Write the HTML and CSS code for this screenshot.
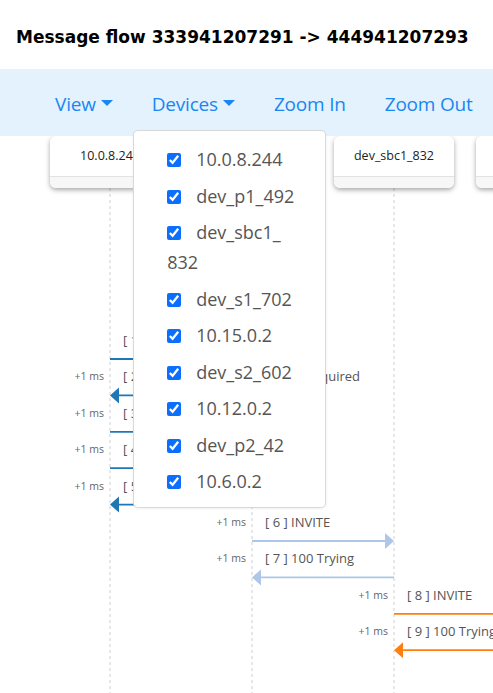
FILE: index.html
```html
<!DOCTYPE html>
<html lang="en">
<head>
<meta charset="utf-8">
<title>Message flow</title>
<link rel="stylesheet" href="styles.css">
</head>
<body>
<div class="page">
  <h1 class="title">Message flow 333941207291 -&gt; 444941207293</h1>
  <nav class="navbar">
    <div class="nav-item"><a class="nav-link caret">View</a></div>
    <div class="nav-item">
      <a class="nav-link caret">Devices</a>
      <ul class="dropdown">
        <li class="dd-item"><input type="checkbox" class="dd-check" checked>10.0.8.244</li>
        <li class="dd-item"><input type="checkbox" class="dd-check" checked>dev_p1_492</li>
        <li class="dd-item"><input type="checkbox" class="dd-check" checked>dev_sbc1_<wbr>832</li>
        <li class="dd-item"><input type="checkbox" class="dd-check" checked>dev_s1_702</li>
        <li class="dd-item"><input type="checkbox" class="dd-check" checked>10.15.0.2</li>
        <li class="dd-item"><input type="checkbox" class="dd-check" checked>dev_s2_602</li>
        <li class="dd-item"><input type="checkbox" class="dd-check" checked>10.12.0.2</li>
        <li class="dd-item"><input type="checkbox" class="dd-check" checked>dev_p2_42</li>
        <li class="dd-item"><input type="checkbox" class="dd-check" checked>10.6.0.2</li>
      </ul>
    </div>
    <div class="nav-item"><a class="nav-link">Zoom In</a></div>
    <div class="nav-item"><a class="nav-link">Zoom Out</a></div>
  </nav>

  <div class="diagram">
    <div class="cards">
      <div class="card"><div class="card-name">10.0.8.244</div><div class="card-foot"></div></div>
      <div class="card"><div class="card-name">dev_p1_492</div><div class="card-foot"></div></div>
      <div class="card"><div class="card-name">dev_sbc1_832</div><div class="card-foot"></div></div>
      <div class="card"><div class="card-name">dev_s1_702</div><div class="card-foot"></div></div>
    </div>
    <svg class="flow" width="700" height="505" viewBox="0 0 700 505">
      <g class="lifelines">
        <line x1="110" y1="0" x2="110" y2="505"/>
        <line x1="252" y1="0" x2="252" y2="505"/>
        <line x1="394" y1="0" x2="394" y2="505"/>
        <line x1="536" y1="0" x2="536" y2="505"/>
      </g>

      <!-- 1 -->
      <g class="msg c-blue">
        <text class="label" x="123" y="157">[ 1 ] INVITE</text>
        <line x1="110" y1="171" x2="244" y2="171"/>
        <polygon points="252,171 243,163 243,179"/>
      </g>
      <!-- 2 -->
      <g class="msg c-blue">
        <text class="delta" x="104" y="192.4">+1 ms</text>
        <text class="label" x="123" y="193.4">[ 2 ] 407 Proxy Authentication Required</text>
        <line x1="118" y1="207.4" x2="252" y2="207.4"/>
        <polygon points="110,207.4 119,199.4 119,215.4"/>
      </g>
      <!-- 3 -->
      <g class="msg c-blue">
        <text class="delta" x="104" y="228.8">+1 ms</text>
        <text class="label" x="123" y="229.8">[ 3 ] ACK</text>
        <line x1="110" y1="243.8" x2="244" y2="243.8"/>
        <polygon points="252,243.8 243,235.8 243,251.8"/>
      </g>
      <!-- 4 -->
      <g class="msg c-blue">
        <text class="delta" x="104" y="265.2">+1 ms</text>
        <text class="label" x="123" y="266.2">[ 4 ] INVITE</text>
        <line x1="110" y1="280.2" x2="244" y2="280.2"/>
        <polygon points="252,280.2 243,272.2 243,288.2"/>
      </g>
      <!-- 5 -->
      <g class="msg c-blue">
        <text class="delta" x="104" y="301.6">+1 ms</text>
        <text class="label" x="123" y="302.6">[ 5 ] 100 Trying</text>
        <line x1="118" y1="316.6" x2="252" y2="316.6"/>
        <polygon points="110,316.6 119,308.6 119,324.6"/>
      </g>
      <!-- 6 -->
      <g class="msg c-light">
        <text class="delta" x="246" y="338">+1 ms</text>
        <text class="label" x="265" y="339">[ 6 ] INVITE</text>
        <line x1="252" y1="353" x2="386" y2="353"/>
        <polygon points="394,353 385,345 385,361"/>
      </g>
      <!-- 7 -->
      <g class="msg c-light">
        <text class="delta" x="246" y="374.4">+1 ms</text>
        <text class="label" x="265" y="375.4">[ 7 ] 100 Trying</text>
        <line x1="260" y1="389.4" x2="394" y2="389.4"/>
        <polygon points="252,389.4 261,381.4 261,397.4"/>
      </g>
      <!-- 8 -->
      <g class="msg c-orange">
        <text class="delta" x="388" y="410.8">+1 ms</text>
        <text class="label" x="407" y="411.8">[ 8 ] INVITE</text>
        <line x1="394" y1="425.8" x2="528" y2="425.8"/>
        <polygon points="536,425.8 527,417.8 527,433.8"/>
      </g>
      <!-- 9 -->
      <g class="msg c-orange">
        <text class="delta" x="388" y="447.2">+1 ms</text>
        <text class="label" x="407" y="448.2">[ 9 ] 100 Trying</text>
        <line x1="402" y1="462.2" x2="536" y2="462.2"/>
        <polygon points="394,462.2 403,454.2 403,470.2"/>
      </g>
    </svg>
  </div>
</div>
</body>
</html>
```

FILE: styles.css
```css
html, body {
  margin: 0;
  padding: 0;
  background: #fff;
}

body {
  font-family: "Open Sans", "Noto Sans", sans-serif;
  color: #212529;
  width: 493px;
  height: 693px;
  overflow: hidden;
}

.page {
  display: flex;
  flex-direction: column;
  height: 693px;
  overflow: hidden;
}

.title {
  margin: 0;
  box-sizing: border-box;
  height: 69px;
  padding: 25px 0 0 16px;
  font-family: "DejaVu Sans", sans-serif;
  font-weight: bold;
  font-size: 17px;
  line-height: 24px;
  color: #000;
  white-space: nowrap;
}

.navbar {
  display: flex;
  align-items: stretch;
  background: #e3f2fd;
  height: 67px;
  padding-left: 35.5px;
  position: relative;
  z-index: 5;
}

.nav-item {
  position: relative;
}

.nav-link {
  display: block;
  padding: 20px 19.5px 17px;
  font-size: 19px;
  letter-spacing: -0.2px;
  line-height: 30px;
  color: #1a86f2;
  text-decoration: none;
  white-space: nowrap;
}

.caret::after {
  content: "";
  display: inline-block;
  margin-left: 5px;
  vertical-align: 5px;
  border-top: 6px solid #1a86f2;
  border-left: 6px solid transparent;
  border-right: 6px solid transparent;
}

.dropdown {
  position: absolute;
  left: 1px;
  top: 61px;
  width: 193px;
  box-sizing: border-box;
  margin: 0;
  list-style: none;
  padding: 10px 25px 7px 33px;
  background: #fff;
  border: 1px solid rgba(0, 0, 0, 0.15);
  border-radius: 5px;
  box-shadow: 0 1px 3px rgba(0, 0, 0, 0.06);
  z-index: 10;
}

.dd-item {
  padding: 3.25px 0;
  font-size: 18px;
  line-height: 30px;
  color: #555;
}

.dd-check {
  width: 14px;
  height: 14px;
  margin: 0 15px 0 0;
  vertical-align: -1px;
  accent-color: #0b6efd;
}

.diagram {
  position: relative;
  flex: 1;
  overflow: hidden;
}

.cards {
  display: flex;
  gap: 22px;
  padding-left: 50px;
  height: 52px;
  position: relative;
  z-index: 2;
}

.card {
  flex: none;
  width: 120px;
  height: 52px;
  box-sizing: border-box;
  background: #fff;
  border-radius: 6px;
  box-shadow: 0 2px 5px rgba(0, 0, 0, 0.35);
  overflow: hidden;
}

.card-name {
  height: 40px;
  line-height: 40px;
  text-align: center;
  font-size: 12.5px;
  color: #222;
  border-bottom: 1px solid #e3e3e3;
  white-space: nowrap;
}

.card-foot {
  height: 11px;
  background: #f7f7f7;
}

.flow {
  display: block;
}

.lifelines line {
  stroke: #cfcfcf;
  stroke-width: 1;
  stroke-dasharray: 3 3;
}

.msg line {
  stroke-width: 1.8;
}

.label {
  font-family: "Open Sans", sans-serif;
  font-size: 13px;
  fill: #555;
}

.delta {
  font-family: "Open Sans", sans-serif;
  font-size: 10.5px;
  fill: #666;
  text-anchor: end;
}

.c-blue line { stroke: #1f77b4; }
.c-blue polygon { fill: #1f77b4; }
.c-light line { stroke: #aec7e8; }
.c-light polygon { fill: #aec7e8; }
.c-orange line { stroke: #ff7f0e; }
.c-orange polygon { fill: #ff7f0e; }
```
